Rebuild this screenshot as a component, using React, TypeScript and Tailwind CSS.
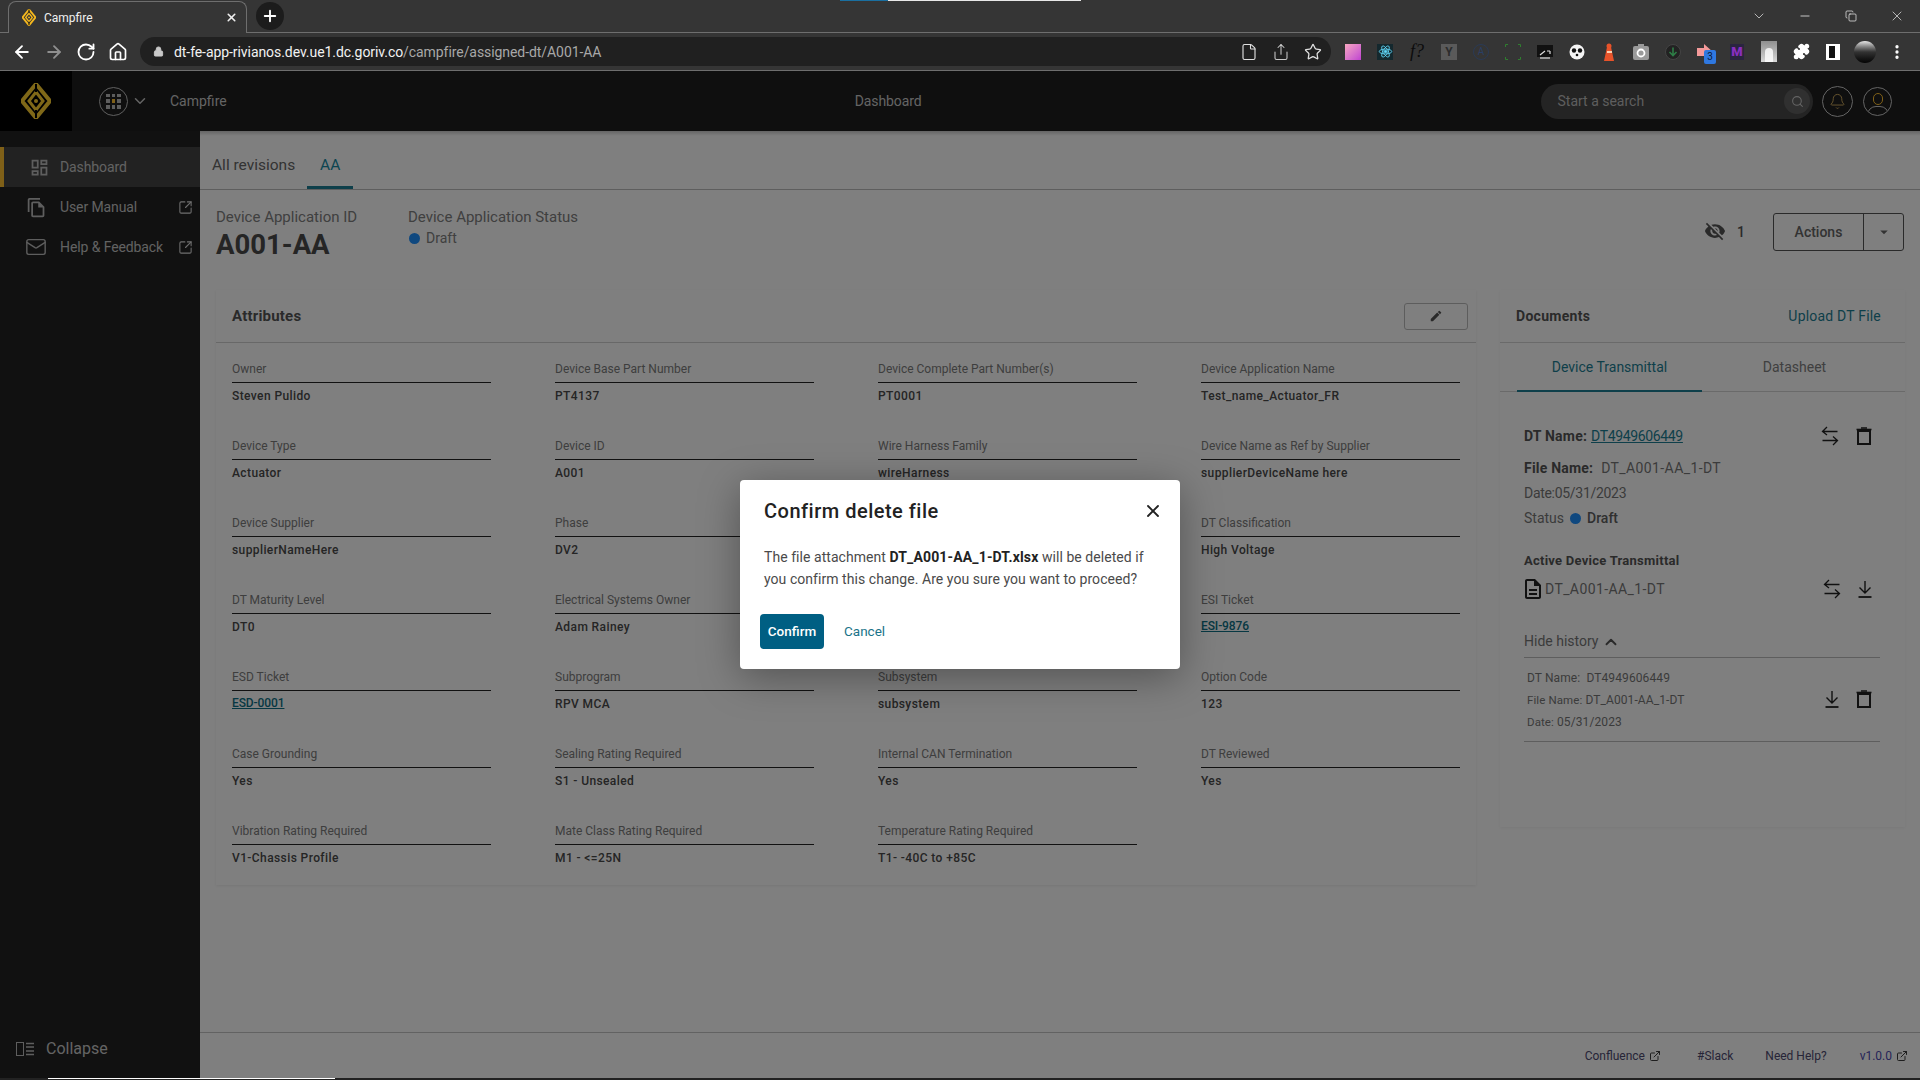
import React from "react";
import { ArrowLeft, ArrowRight, RotateCw, Home, Lock, File, Share, Star, Puzzle, X, Plus, ChevronDown, ChevronUp, Minus, Search, Bell, Copy, ExternalLink, Mail, EllipsisVertical, SquareArrowOutUpRight } from "lucide-react";
import { MdOutlineDashboard, MdEdit, MdVisibilityOff, MdArrowDropDown, MdOutlineDescription, MdOutlineFileCopy } from "react-icons/md";

const Logo = ({ size = 20, color = "#f5b81e" }: { size?: number; color?: string }) => (
  <svg width={size} height={size * 1.2} viewBox="0 0 30 36" fill="none">
    <path d="M15 1 L29 18 L15 35 L1 18 Z" stroke={color} strokeWidth="4" strokeLinejoin="round" />
    <path d="M15 9 L22 18 L15 27 L8 18 Z" stroke={color} strokeWidth="3" />
    <path d="M15 1 V9 M15 27 V35" stroke="#000" strokeWidth="2" />
    <circle cx="15" cy="18" r="2" fill={color} />
  </svg>
);

const Swap = () => (
  <svg width="18" height="20" viewBox="0 0 18 20" fill="none" stroke="#222" strokeWidth="1.3">
    <path d="M16.500 5.500H1.500M6 1L1.500 5.500L6 9" />
    <path d="M1.500 14.500H16.500M12 10.500L16.500 14.500L12 19" />
  </svg>
);
const Trash = () => (
  <svg width="16" height="18" viewBox="0 0 16 18" fill="none" stroke="#222">
    <rect x="2" y="4" width="12" height="13" strokeWidth="2" />
    <path d="M0.500 2.500H15.500" strokeWidth="1.600" />
    <path d="M5 1H11" strokeWidth="1.500" />
  </svg>
);
const Download = () => (
  <svg width="14" height="18" viewBox="0 0 14 18" fill="none" stroke="#222" strokeWidth="1.400">
    <path d="M7 1V12.500M1.500 7.500L7 13L12.500 7.500" />
    <path d="M0.500 17H13.500" strokeWidth="1.800" />
  </svg>
);

const Field = ({ label, value, link }: { label: string; value: string; link?: boolean }) => (
  <div className="h-[77px]">
    <div className="h-[23px] border-b border-[#222] text-[12px] leading-[18px] text-[#7c7c7c]">{label}</div>
    <div className={`text-[12px] font-medium ${link ? "leading-[24px] tracking-[-0.1px] text-[#0e7186] underline" : "leading-[26px] tracking-[0.4px] text-[#4a4a4a]"}`}>{value}</div>
  </div>
);

const rows: [string, string, boolean?][] = [
  ["Owner", "Steven Pulido"], ["Device Base Part Number", "PT4137"], ["Device Complete Part Number(s)", "PT0001"], ["Device Application Name", "Test_name_Actuator_FR"],
  ["Device Type", "Actuator"], ["Device ID", "A001"], ["Wire Harness Family", "wireHarness"], ["Device Name as Ref by Supplier", "supplierDeviceName here"],
  ["Device Supplier", "supplierNameHere"], ["Phase", "DV2"], ["\u00a0", "\u00a0"], ["DT Classification", "High Voltage"],
  ["DT Maturity Level", "DT0"], ["Electrical Systems Owner", "Adam Rainey"], ["\u00a0", "\u00a0"], ["ESI Ticket", "ESI-9876", true],
  ["ESD Ticket", "ESD-0001", true], ["Subprogram", "RPV MCA"], ["Subsystem", "subsystem"], ["Option Code", "123"],
  ["Case Grounding", "Yes"], ["Sealing Rating Required", "S1 - Unsealed"], ["Internal CAN Termination", "Yes"], ["DT Reviewed", "Yes"],
  ["Vibration Rating Required", "V1-Chassis Profile"], ["Mate Class Rating Required", "M1 - <=25N"], ["Temperature Rating Required", "T1- -40C to +85C"],
];

const NavItem = ({ icon, label, active, ext }: { icon: React.ReactNode; label: string; active?: boolean; ext?: boolean }) => (
  <div className={`h-10 flex items-center border-l-4 pl-[23px] pr-[7px] ${active ? "bg-[#444444] border-[#ffc030]" : "border-transparent"}`}>
    <span className="w-[33px] flex items-center text-[#bdbdbd]">{icon}</span>
    <span className="flex-1 text-[14px] tracking-[-0.1px] text-[#c4c4c4] whitespace-nowrap">{label}</span>
    {ext && <SquareArrowOutUpRight size={15} className="text-[#dddddd]" strokeWidth={1.7} />}
  </div>
);

const Ext = ({ children }: { children: React.ReactNode }) => (
  <div className="w-[32px] h-[18px] flex items-center justify-center relative">{children}</div>
);

const FootLink = ({ children, ext, className }: { children: React.ReactNode; ext?: boolean; className?: string }) => (
  <span className={`flex items-center gap-[4px] text-[12px] ${className ?? "text-[#4e4a70]"}`}>
    {children}
    {ext && <ExternalLink size={12} strokeWidth={1.9} className="text-[#333]" />}
  </span>
);

export default function App() {
  return (
    <div className="relative w-[1920px] h-[1080px] overflow-hidden flex flex-col bg-white font-['Roboto',sans-serif]">
      {/* Tab strip */}
      <div className="relative h-[33px] shrink-0 bg-[#353535] flex items-end pl-[8px] border-b border-[#6e6e6e]">
        <div className="absolute left-[840px] top-0 h-px w-[48px] bg-[#1a6fa0]" />
        <div className="absolute left-[888px] top-0 h-px w-[193px] bg-[#e8e8e8]" />
        <div className="w-[239px] h-[32px] -mb-px bg-[#353535] rounded-t-lg border-x border-t border-[#6e6e6e] border-b-[#353535] flex items-center pl-[13px] pr-[8px]">
          <Logo size={14} />
          <span className="ml-[8px] flex-1 text-[12px] text-[#f0f0f0]">Campfire</span>
          <X size={13} strokeWidth={3} className="text-[#eee]" />
        </div>
        <div className="ml-[9px] mb-[2px] w-[28px] h-[28px] rounded-full bg-[#1c1c1c] flex items-center justify-center">
          <Plus size={18} strokeWidth={2.5} className="text-white" />
        </div>
        <div className="ml-auto h-full flex items-center text-[#e5e5e5]">
          <span className="w-[46px] flex justify-center"><ChevronDown size={16} strokeWidth={1.1} /></span>
          <span className="w-[46px] flex justify-center"><Minus size={14} strokeWidth={1.4} /></span>
          <span className="w-[46px] flex justify-center"><Copy size={12} strokeWidth={1.5} /></span>
          <span className="w-[46px] flex justify-center"><X size={16} strokeWidth={1.1} /></span>
        </div>
      </div>
      {/* Toolbar */}
      <div className="h-[38px] shrink-0 bg-[#353535] border-b border-[#6e6e6e] flex items-center pl-[12px]">
        <div className="flex items-center gap-[12px] text-white">
          <ArrowLeft size={20} strokeWidth={2.2} />
          <ArrowRight size={20} strokeWidth={2.2} className="text-[#8f8f8f]" />
          <RotateCw size={20} strokeWidth={2.2} />
          <Home size={20} strokeWidth={2} />
        </div>
        <div className="ml-[12px] w-[1191px] h-[29px] rounded-full bg-[#202020] flex items-center pl-[13px] pr-[9px]">
          <Lock size={11} fill="#c9c9c9" className="text-[#c9c9c9]" />
          <span className="ml-[10px] flex-1 pt-[2px] text-[14px] text-[#f2f2f2] whitespace-nowrap tracking-[-0.07px]">
            dt-fe-app-rivianos.dev.ue1.dc.goriv.co<span className="text-[#a8a8a8]">/campfire/assigned-dt/A001-AA</span>
          </span>
          <div className="flex items-center gap-[14px] text-[#e0e0e0]">
            <File size={18} strokeWidth={1.5} />
            <Share size={18} strokeWidth={1.4} className="text-[#c9c9c9]" />
            <Star size={18} strokeWidth={1.7} />
          </div>
        </div>
        <div className="ml-[-2px] flex items-center pl-[8px]">
          <Ext><div className="w-[16px] h-[16px] bg-gradient-to-br from-[#f8a6c0] to-[#c03fd0]" /></Ext>
          <Ext>
            <div className="w-[16px] h-[16px] bg-[#14282e] flex items-center justify-center">
              <svg width="15" height="15" viewBox="0 0 24 24" fill="none" stroke="#61dafb" strokeWidth="1.300"><ellipse cx="12" cy="12" rx="10" ry="4" /><ellipse cx="12" cy="12" rx="10" ry="4" transform="rotate(60 12 12)" /><ellipse cx="12" cy="12" rx="10" ry="4" transform="rotate(120 12 12)" /><circle cx="12" cy="12" r="2" fill="#61dafb" /></svg>
            </div>
          </Ext>
          <Ext><span className="font-['Liberation_Serif',serif] italic text-[18px] text-[#0c0c0c]">f?</span></Ext>
          <Ext><div className="w-[16px] h-[16px] bg-[#5a5a5a] text-[#2c2c2c] text-[12px] font-bold flex items-center justify-center">Y</div></Ext>
          <Ext><div className="w-[16px] h-[16px] rounded-full border border-[#2a3a55] text-[#2a3f66] text-[10px] flex items-center justify-center">A</div></Ext>
          <Ext>
            <svg width="16" height="16" viewBox="0 0 16 16" fill="none" stroke="#2f7f2f"><path d="M0.500 3V0.500H3M13 0.500H15.500V3M15.500 13V15.500H13M3 15.500H0.500V13" /></svg>
          </Ext>
          <Ext>
            <svg width="16" height="14" viewBox="0 0 16 14"><rect width="16" height="12" fill="#111" /><path d="M3 10L8 6M10 6h3M13 6v3" stroke="#ddd" strokeWidth="1.200" /><rect x="3" y="12" width="10" height="2" fill="#999" /></svg>
          </Ext>
          <Ext>
            <svg width="16" height="16" viewBox="0 0 16 16"><circle cx="8" cy="8" r="7.500" fill="#f4f4f4" /><circle cx="5" cy="6.500" r="2.200" fill="#111" /><circle cx="11" cy="6.500" r="2.200" fill="#111" /><circle cx="8" cy="11" r="1.300" fill="#111" /></svg>
          </Ext>
          <Ext>
            <svg width="12" height="18" viewBox="0 0 12 18"><path d="M4 4h4l3 14H1z" fill="#e8532a" /><circle cx="6" cy="3" r="2.500" fill="#e8532a" /><rect x="4" y="8" width="5" height="2" fill="#fbd0b0" /></svg>
          </Ext>
          <Ext>
            <svg width="16" height="16" viewBox="0 0 16 16"><rect y="2" width="16" height="14" rx="2" fill="#9a9a9a" /><rect x="5" y="0" width="6" height="3" fill="#9a9a9a" /><circle cx="8" cy="9" r="3.500" fill="none" stroke="#fff" strokeWidth="1.800" /></svg>
          </Ext>
          <Ext>
            <svg width="16" height="18" viewBox="0 0 16 18" fill="none"><circle cx="8" cy="9" r="7.500" fill="#222" stroke="#444" /><path d="M8 4.500v8M4.500 9L8 12.500 11.500 9" stroke="#2e7d46" strokeWidth="1.600" /></svg>
          </Ext>
          <Ext>
            <svg width="16" height="16" viewBox="0 0 16 16"><path d="M0 4h7V0l9 8-9 8v-4H0z" fill="#f49a9a" /></svg>
            <div className="absolute left-[15px] top-[7px] w-[12px] h-[14px] rounded-[2px] bg-[#2f78e0] text-[10px] leading-[14px] text-[#0b1b3a] text-center">3</div>
          </Ext>
          <Ext><span className="px-[1px] bg-[#2a2440] text-[13px] leading-[16px] font-black text-[#8a2fc0]">M</span></Ext>
          <Ext>
            <div className="w-[16px] h-[21px] bg-gradient-to-b from-[#8f8f8f] to-[#d8d8d8] flex items-end justify-center"><div className="w-[8px] h-[14px] bg-white/80 rounded-t-full" /></div>
          </Ext>
          <Ext><Puzzle size={17} fill="#fff" className="text-white" /></Ext>
          <Ext><div className="w-[14px] h-[16px] bg-[#111] border-x-[3px] border-y-[2px] border-white border-r-[5px]" /></Ext>
          <Ext><div className="w-[22px] h-[22px] rounded-full bg-gradient-to-b from-[#e8e8e8] via-[#333] to-[#050505]" /></Ext>
          <Ext><EllipsisVertical size={18} strokeWidth={2.4} className="text-white" /></Ext>
        </div>
      </div>

      {/* App */}
      <div className="flex-1 min-h-0 flex flex-col">
        <header className="h-[60px] shrink-0 bg-[#1e1e1e] flex items-center">
          <div className="w-[72px] h-full bg-black flex items-center justify-center"><Logo size={30} color="#ffd030" /></div>
          <div className="ml-[27px] w-[29px] h-[29px] rounded-full border border-[#c0c0c0] grid grid-cols-3 gap-[2px] p-[6px]">
            {[0, 1, 2, 3, 4, 5, 6, 7, 8].map((i) => (
              <div key={i} className={i === 4 ? "bg-[#ffc030]" : "bg-[#bbbbbb]"} />
            ))}
          </div>
          <ChevronDown size={18} strokeWidth={2} className="ml-[3px] text-[#c8c8c8]" />
          <span className="ml-[21px] text-[14px] text-[#c8c8c8]">Campfire</span>
          <span className="ml-[628px] text-[14px] tracking-[-0.1px] text-[#c8c8c8]">Dashboard</span>
          <div className="ml-[620px] w-[272px] h-[35px] rounded-full bg-[#484848] flex items-center pl-[16px] pr-[3px]">
            <span className="flex-1 text-[14px] text-[#bcbcbc]">Start a search</span>
            <div className="w-[26px] h-[26px] rounded-full bg-[#606060] flex items-center justify-center"><Search size={13} className="text-[#c8c8c8]" /></div>
          </div>
          <div className="ml-[9px] w-[31px] h-[31px] rounded-full border-[1.5px] border-[#c8c8c8] flex items-center justify-center"><Bell size={17} strokeWidth={1.3} className="text-[#d8b060]" /></div>
          <div className="ml-[10px] w-[29px] h-[29px] rounded-full border-[1.5px] border-[#c8c8c8] overflow-hidden relative flex justify-center">
            <div className="mt-[5px] w-[10px] h-[12px] rounded-full border-[1.5px] border-[#ffc030]" />
            <div className="absolute top-[18px] w-[22px] h-[18px] rounded-full border-[1.5px] border-[#c8c8c8]" />
          </div>
        </header>
        <div className="flex-1 min-h-0 flex">
          <aside className="w-[200px] shrink-0 bg-[#222222] flex flex-col pt-[16px]">
            <NavItem active icon={<MdOutlineDashboard size={21} className="ml-[2px]" />} label="Dashboard" />
            <NavItem icon={<MdOutlineFileCopy size={21} className="-ml-[1px]" />} label="User Manual" ext />
            <NavItem icon={<Mail size={22} strokeWidth={1.5} className="-ml-[2px]" />} label="Help & Feedback" ext />
            <div className="mt-auto mb-[17px] ml-[16px] flex items-center gap-[12px]">
              <svg width="18" height="14" viewBox="0 0 18 14" fill="none" stroke="#bdbdbd"><rect x="0.500" y="0.500" width="7" height="13" /><path d="M10 1.500H18M10 5H18M10 9H18M10 12.500H18" strokeWidth="1.600" /></svg>
              <span className="text-[16px] text-[#c8c8c8]">Collapse</span>
            </div>
          </aside>
          <main className="flex-1 min-w-0 flex flex-col bg-white relative">
            <div className="absolute inset-x-0 top-0 h-[5px] bg-gradient-to-b from-black/20 to-transparent" />
            <div className="h-[59px] shrink-0 border-b border-[#bdbdbd] flex items-end pl-[12px] text-[15.500px]">
              <span className="pb-[12px] text-[#666666]">All revisions</span>
              <span className="ml-[12px] w-[46px] h-[46px] pb-[9px] flex items-end justify-center border-b-[3px] border-[#1c7f94] text-[#1a8ba3]">AA</span>
            </div>
            <div className="h-[100px] shrink-0 flex pl-[16px] pr-[16px] pt-[18px]">
              <div className="w-[192px]">
                <div className="text-[15px] leading-[18px] text-[#808080]">Device Application ID</div>
                <div className="text-[27.500px] leading-[38px] font-bold text-[#4a4a4a]">A001-AA</div>
              </div>
              <div>
                <div className="text-[15px] leading-[18px] text-[#808080]">Device Application Status</div>
                <div className="flex items-center gap-[6px] mt-[3px] text-[14px] leading-[18px] text-[#808080]">
                  <span className="ml-px w-[11px] h-[11px] rounded-full bg-[#1e90ff]" />Draft
                </div>
              </div>
              <div className="ml-auto flex items-start pt-[5px]">
                <MdVisibilityOff size={22} className="mt-[7px] text-[#555]" />
                <span className="ml-[11px] mt-[9px] text-[14px] font-medium text-[#555]">1</span>
                <div className="ml-[28px] w-[131px] h-[38px] rounded-[3px] border border-[#555] flex">
                  <span className="w-[90px] border-r border-[#555] flex items-center justify-center text-[14px] font-medium text-[#666]">Actions</span>
                  <span className="flex-1 flex items-center justify-center"><MdArrowDropDown size={18} className="text-[#666]" /></span>
                </div>
              </div>
            </div>
            <div className="flex items-start pl-[16px] pr-[15px]">
              <section className="w-[1260px] h-[595px] shrink-0 bg-white shadow-[0_1px_3px_rgba(0,0,0,0.08)]">
                <div className="h-[53px] border-b border-[#d0d0d0] flex items-center pl-[16px] pr-[8px]">
                  <span className="text-[15px] font-bold tracking-[0.2px] text-[#555]">Attributes</span>
                  <div className="ml-auto w-[64px] h-[27px] rounded-[3px] border border-[#bbb] flex items-center justify-center"><MdEdit size={14} className="text-[#555]" /></div>
                </div>
                <div className="pl-[16px] pt-[17px] grid grid-cols-[repeat(4,259px)] gap-x-[64px]">
                  {rows.map(([l, v, link], i) => (<Field key={i} label={l} value={v} link={link} />))}
                </div>
              </section>
              <section className="ml-[24px] w-[405px] h-[537px] bg-white shadow-[0_1px_3px_rgba(0,0,0,0.06)]">
                <div className="h-[53px] border-b border-[#d4d4d4] flex items-center justify-between pl-[16px] pr-[24px]">
                  <span className="text-[14px] font-bold tracking-[0.3px] text-[#555]">Documents</span>
                  <span className="text-[14px] tracking-[0.2px] text-[#1c7f94]">Upload DT File</span>
                </div>
                <div className="h-[49px] border-b border-[#d4d4d4] flex pl-[17px] text-[14px]">
                  <span className="w-[185px] h-[49px] -mb-px flex items-center justify-center pt-[1px] border-b-2 border-[#1c7f94] text-[#1c7f94]">Device Transmittal</span>
                  <span className="w-[185px] flex items-center justify-center pt-[1px] text-[#808080]">Datasheet</span>
                </div>
                <div className="pl-[24px] pr-[25px] text-[14px] text-[#777]">
                  <div className="h-[32px] mt-[28px] flex items-center">
                    <b className="font-bold text-[#555] tracking-[0.2px]">DT Name:</b>
                    <span className="ml-[4px] tracking-[-0.35px] text-[#1c7f94] underline">DT4949606449</span>
                    <span className="ml-auto mr-[17px] flex"><Swap /></span>
                    <span className="mr-[8px] flex"><Trash /></span>
                  </div>
                  <div className="h-[25px] mt-[4px] flex items-center"><b className="font-bold text-[#555] tracking-[0.2px]">File Name:</b><span className="ml-[8px] tracking-[0.4px]">DT_A001-AA_1-DT</span></div>
                  <div className="h-[25px] flex items-center tracking-[-0.3px]">Date:05/31/2023</div>
                  <div className="h-[25px] flex items-center">Status<span className="ml-[6px] w-[11px] h-[11px] rounded-full bg-[#1e90ff]" /><span className="ml-[6px] font-medium text-[#606060]">Draft</span></div>
                  <div className="mt-[17px] h-[25px] flex items-center font-bold text-[13px] tracking-[0.25px] text-[#555]">Active Device Transmittal</div>
                  <div className="h-[30px] mt-[1px] flex items-center">
                    <MdOutlineDescription size={24} className="-ml-[3px] text-[#222]" />
                    <span className="tracking-[0.4px]">DT_A001-AA_1-DT</span>
                    <span className="ml-auto mr-[17px] flex"><Swap /></span>
                    <span className="mr-[8px] flex"><Download /></span>
                  </div>
                  <div className="mt-[22px] h-[32px] border-b border-[#bdbdbd] flex items-center">
                    <span>Hide history</span><ChevronUp size={18} strokeWidth={2.5} className="ml-[4px] text-[#555]" />
                  </div>
                  <div className="h-[84px] pl-[3px] border-b border-[#bdbdbd] flex items-center text-[12px] text-[#777]">
                    <div className="leading-[22px] tracking-[0.1px]">
                      <div>DT Name: &nbsp;DT4949606449</div>
                      <div><span className="text-[11.500px]">File Name:</span> DT_A001-AA_1-DT</div>
                      <div><span className="text-[11.500px]">Date:</span> 05/31/2023</div>
                    </div>
                    <span className="ml-auto mr-[17px] -mt-[2px] flex"><Download /></span>
                    <span className="mr-[8px] -mt-[2px] flex"><Trash /></span>
                  </div>
                </div>
              </section>
            </div>
            <footer className="mt-auto h-[46px] shrink-0 border-t border-[#c4c4c4] flex items-center justify-end pr-[12px]">
              <FootLink ext>Confluence</FootLink>
              <FootLink className="ml-[36px] text-[#4e4a70]">#Slack</FootLink>
              <FootLink className="ml-[32px] text-[#4e4a70]">Need Help?</FootLink>
              <FootLink ext className="ml-[33px] text-[#4c4ab0]">v1.0.0</FootLink>
            </footer>
          </main>
        </div>
      </div>

      {/* Bottom strip */}
      <div className="h-[2px] shrink-0 bg-[#222222] relative">
        <div className="absolute left-[48px] w-[287px] h-px bg-white" />
      </div>

      {/* Backdrop + dialog */}
      <div className="absolute left-0 right-0 top-[71px] bottom-[2px] bg-black/50 flex items-center justify-center">
        <div className="relative w-[440px] h-[189px] bg-white rounded-[4px] shadow-[0_8px_40px_rgba(0,0,0,0.35)] pt-[13px] px-[24px]">
          <div className="text-[20px] leading-[36px] font-medium tracking-[0.5px] text-[#222]">Confirm delete file</div>
          <X size={20} strokeWidth={2.2} className="absolute right-[17px] top-[21px] text-[#222]" />
          <div className="mt-[17px] text-[14px] leading-[22px] tracking-[0.05px] text-[#4a4a4a]">
            The file attachment <b className="font-bold tracking-[0.15px] text-[#222]">DT_A001-AA_1-DT.xlsx</b> will be deleted if you confirm this change. Are you sure you want to proceed?
          </div>
          <div className="absolute left-[20px] top-[134px] flex items-center">
            <div className="w-[64px] h-[35px] pb-[1px] rounded-[4px] bg-[#005f83] text-white text-[13.500px] font-medium flex items-center justify-center">Confirm</div>
            <span className="ml-[20px] pb-[1px] text-[13.500px] text-[#1a7389]">Cancel</span>
          </div>
        </div>
      </div>
    </div>
  );
}
